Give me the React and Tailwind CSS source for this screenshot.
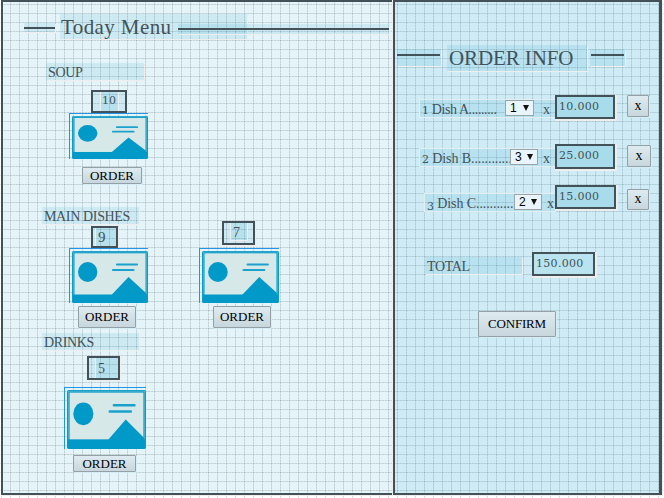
import { clsx } from "clsx";

function GridPaper() {
  return (
    <svg className="absolute inset-0 h-full w-full" aria-hidden="true">
      <defs>
        <pattern id="paper" width="9" height="9" x="1" y="4" patternUnits="userSpaceOnUse">
          <path d="M0 .5H9" stroke="#000" strokeOpacity=".08" strokeDasharray="2 1" />
          <path d="M.5 0V9" stroke="#000" strokeOpacity=".08" strokeDasharray="2 1" />
          <path d="M0 .5H9M.5 0V9" stroke="#000" strokeOpacity=".07" />
        </pattern>
      </defs>
      <rect width="100%" height="100%" fill="url(#paper)" />
    </svg>
  );
}

const tint = "bg-[#0096c8]/10 shadow-[1px_1px_0_#eeeeee]";

function Label({ className, children }) {
  return (
    <div className={clsx(tint, "h-[17px] whitespace-nowrap pl-[2px] text-[14px] leading-[19px] tracking-[-0.35px]", className)}>
      {children}
    </div>
  );
}

function Rule({ className, lineClass = "mt-1" }) {
  return (
    <div className={clsx(tint, "shrink-0", className)}>
      <div className={clsx("h-[2px] bg-[#425258]", lineClass)} />
    </div>
  );
}

function Count({ className, innerClass, children }) {
  return (
    <div className={clsx("flex shrink-0 border-2 border-[#425258] bg-[#0096c8]/10 shadow-[1px_1px_0_#eeeeee]", className)}>
      <div className={clsx("border-[#eeeeee] bg-[#0096c8]/10", innerClass)}>{children}</div>
    </div>
  );
}

function Picture({ className }) {
  return (
    <div className={clsx("shrink-0 border-l border-t border-[#2196e8] pl-[2px] pt-[2px]", className)}>
      <svg className="block h-full w-full" viewBox="0 0 76 52" preserveAspectRatio="none">
        <rect width="76" height="52" rx="1.5" fill="#0099c8" />
        <rect x="1.2" y="1" width="73.6" height="49" fill="none" stroke="#75bfd7" strokeWidth=".6" />
        <path d="M1 43.5H75V51H1Z" fill="#0099c8" />
        <rect x="2.5" y="2.3" width="71" height="41.2" fill="#d7e8e8" />
        <ellipse cx="15.7" cy="21" rx="9.7" ry="10" fill="#0099c8" />
        <path d="M39 44.5L56.5 26L74 42V47H39Z" fill="#0099c8" />
        <path d="M45 13.5H65M41 19H61.5" stroke="#1ba1cb" strokeWidth="2.2" strokeLinecap="round" />
      </svg>
    </div>
  );
}

function Button({ className, children }) {
  return (
    <button
      className={clsx(
        "flex shrink-0 items-center justify-center whitespace-nowrap rounded-[1px] border border-[#93a0a5] bg-gradient-to-b from-[#deebf0] to-[#c8d7dd] text-black shadow-[1px_1px_0_#d5eef5]",
        className
      )}
    >
      {children}
    </button>
  );
}

function Quantity({ className, children }) {
  return (
    <div
      className={clsx(
        "flex h-4 shrink-0 items-center justify-between border border-[#98a6ab] bg-[#e9f5fa] pl-[4px] pr-[4px] font-['Liberation_Sans',sans-serif] text-[12px] leading-none text-black",
        className
      )}
    >
      <span>{children}</span>
      <svg className="h-[6px] w-[6px]" viewBox="0 0 6 6">
        <path d="M0 0H6L3 6Z" fill="#111" />
      </svg>
    </div>
  );
}

function Price({ className, children }) {
  return (
    <div
      className={clsx(
        "shrink-0 border-2 border-[#425258] pl-[2px] pt-[2px] font-['DejaVu_Serif',serif] text-[11px] leading-[15px] tracking-[0.3px] shadow-[1px_1px_0_1px_#eeeeee]",
        className
      )}
    >
      {children}
    </div>
  );
}

function DishRow({ rowClass, stripClass, num, numClass, dish, nameClass, qty, qtyClass, timesClass, price, priceClass, removeClass }) {
  return (
    <div className={clsx("flex items-start", rowClass)}>
      <div className={clsx("flex h-[17px] shrink-0 bg-[#0096c8]/10 shadow-[0_0_0_1px_#e3eef1]", stripClass)}>
        <div className={clsx("shrink-0 whitespace-pre pl-[2px] text-[14px] leading-[19px]", nameClass)}>
          <span className={clsx("font-['DejaVu_Serif',serif] text-[11px] leading-none", numClass)}>{num}</span>
          {" " + dish}
        </div>
        <Quantity className={qtyClass}>{qty}</Quantity>
        <span className={clsx("text-[14px] leading-[19px]", timesClass)}>x</span>
      </div>
      <Price className={clsx("bg-[#a9dceb]", priceClass)}>{price}</Price>
      <Button className={clsx("pb-[1px] text-[14px] leading-none", removeClass)}>x</Button>
    </div>
  );
}

function MenuColumn() {
  return (
    <section className="h-[495px] w-[391px] shrink-0 border-y-2 border-l-2 border-[#425258] bg-[#0096c8]/10 shadow-[1px_1px_0_#eeeeee]">
      <div className="flex h-[49px] items-start pl-[21px] pt-[12px]">
        <Rule className="mt-[9px] h-[9px] w-[31px]" />
        <h1 className={clsx(tint, "ml-[5px] h-[25px] w-[187px] shrink-0 whitespace-nowrap pl-[1px] text-[21px] leading-[27px] tracking-[0.4px]")}>
          Today Menu
        </h1>
        <Rule className="-ml-[69px] mt-[10px] h-[10px] w-[211px]" />
      </div>

      <div className="flex h-[156px] flex-col items-start pt-[12px]">
        <Label className="ml-[43px] w-[98px]">SOUP</Label>
        <Count className="ml-[88px] mt-[10px] h-[23px] w-[36px]" innerClass="ml-[7px] w-[19px] border-x pl-[1px] font-['DejaVu_Serif',serif] text-[11px] leading-[17px]">
          10
        </Count>
        <Picture className="ml-[66px] h-[46px] w-[79px]" />
        <Button className="ml-[79px] mt-[8px] h-[17px] w-[60px] text-[13px]">ORDER</Button>
      </div>

      <div className="flex h-[126px] items-start">
        <div className="flex w-[196px] shrink-0 flex-col items-start">
          <Label className="ml-[39px] w-[97px]">MAIN DISHES</Label>
          <Count className="ml-[88px] mt-[2px] h-[22px] w-[27px]" innerClass="ml-[2px] w-full border-l pl-[2px] text-[15px] leading-[19px]">
            9
          </Count>
          <Picture className="ml-[66px] h-[55px] w-[79px]" />
          <Button className="ml-[75px] mt-[3px] h-[22px] w-[58px] text-[13px]">ORDER</Button>
        </div>
        <div className="flex flex-col items-start pt-[14px]">
          <Count className="ml-[23px] h-[24px] w-[33px]" innerClass="ml-[6px] h-[18px] w-[18px] border-x border-b pl-[2px] text-[14px] leading-[19px]">
            7
          </Count>
          <Picture className="mt-[3px] h-[55px] w-[80px]" />
          <Button className="ml-[14px] mt-[3px] h-[22px] w-[58px] text-[13px]">ORDER</Button>
        </div>
      </div>

      <div className="flex flex-col items-start">
        <Label className="ml-[39px] w-[97px]">DRINKS</Label>
        <Count className="ml-[84px] mt-[6px] h-[24px] w-[33px]" innerClass="ml-[6px] w-full border-l pl-[2px] text-[14px] leading-[21px]">
          5
        </Count>
        <Picture className="ml-[61px] mt-[7px] h-[62px] w-[82px]" />
        <Button className="ml-[70px] mt-[6px] h-[17px] w-[63px] text-[13px]">ORDER</Button>
      </div>
    </section>
  );
}

function OrderColumn() {
  return (
    <section className="ml-px h-[495px] w-[269px] shrink-0 border-y-2 border-l-2 border-r-[3px] border-[#425258] bg-[#0096c8]/19 shadow-[1px_1px_0_#eeeeee]">
      <div className="flex items-start pl-[2px] pt-[43px]">
        <Rule className="mt-[4px] h-[17px] w-[44px]" lineClass="mt-[5px] w-[43px]" />
        <h2 className={clsx(tint, "ml-[6px] h-[26px] w-[140px] shrink-0 whitespace-nowrap pl-[2px] text-[21px] leading-[27px] tracking-[-0.1px]")}>
          ORDER INFO
        </h2>
        <Rule className="ml-[3px] mt-[4px] h-[17px] w-[35px]" lineClass="ml-px mt-[5px] w-[33px]" />
      </div>

      <DishRow
        rowClass="mt-[24px] h-[49px] pl-[25px]"
        stripClass="mt-[5px] w-[135px]"
        num="1"
        dish="Dish A........."
        nameClass="w-[85px] tracking-[-0.4px]"
        qty="1"
        qtyClass="w-[29px]"
        timesClass="ml-[9px]"
        price="10.000"
        priceClass="h-[24px] w-[60px]"
        removeClass="ml-[12px] h-[22px] w-[22px]"
      />
      <DishRow
        rowClass="h-[41px] pl-[25px]"
        stripClass="mt-[5px] w-[135px]"
        num="2"
        dish="Dish B............"
        nameClass="w-[90px] tracking-[-0.1px]"
        qty="3"
        qtyClass="w-[28px]"
        timesClass="ml-[5px]"
        price="25.000"
        priceClass="h-[25px] w-[60px]"
        removeClass="ml-[12px] mt-px h-[22px] w-[24px]"
      />
      <DishRow
        rowClass="h-[67px] pl-[30px]"
        stripClass="mt-[9px] w-[130px]"
        num="3"
        numClass="relative top-[2px]"
        dish="Dish C............"
        nameClass="w-[89px] tracking-[-0.1px]"
        qty="2"
        qtyClass="w-[28px]"
        timesClass="ml-[5px]"
        price="15.000"
        priceClass="h-[24px] w-[61px]"
        removeClass="ml-[11px] mt-[4px] h-[21px] w-[22px]"
      />

      <div className="flex items-start pl-[30px]">
        <Label className="mt-[5px] w-[97px] shrink-0">TOTAL</Label>
        <Price className="ml-[10px] h-[24px] w-[63px] bg-[#b9e3ee]">150.000</Price>
      </div>
      <Button className="ml-[83px] mt-[35px] h-[26px] w-[78px] text-[13px] tracking-[-0.2px]">CONFIRM</Button>
    </section>
  );
}

export default function App() {
  return (
    <main className="relative h-[498px] w-[664px] overflow-hidden bg-white font-['Liberation_Serif',serif] text-[#425258]">
      <GridPaper />
      <div className="relative flex pl-px">
        <MenuColumn />
        <OrderColumn />
      </div>
    </main>
  );
}
